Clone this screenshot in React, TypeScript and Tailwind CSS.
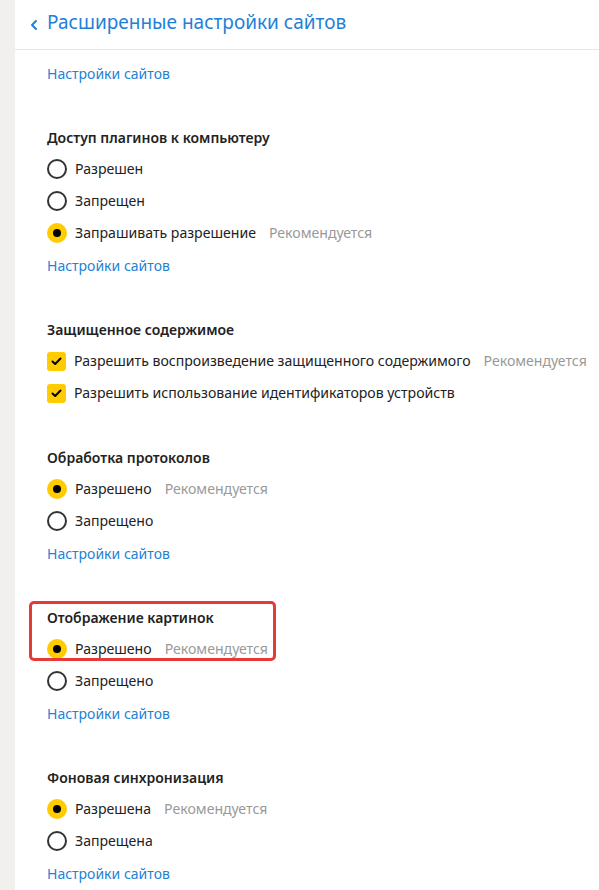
import { ReactNode } from 'react';

type Opt = { label: string; checked?: boolean; rec?: boolean };

function Radio({ checked }: { checked?: boolean }) {
  if (checked) {
    return (
      <span className="flex h-5 w-5 shrink-0 items-center justify-center rounded-full bg-[#ffcc00]">
        <span className="h-2 w-2 rounded-full bg-black" />
      </span>
    );
  }
  return <span className="h-5 w-5 shrink-0 rounded-full border-2 border-[#333]" />;
}

function Check() {
  return (
    <span className="flex h-[19px] w-[19px] shrink-0 items-center justify-center rounded-[3px] bg-[#ffcc00]">
      <svg width="11" height="9" viewBox="0 0 11 9" fill="none">
        <path d="M1.5 4.5 L4.2 7 L9.5 1.5" stroke="#000" strokeWidth="2" strokeLinecap="round" strokeLinejoin="round" />
      </svg>
    </span>
  );
}

function Row({ children, label, rec }: { children: ReactNode; label: string; rec?: boolean }) {
  return (
    <div className="flex h-8 items-center">
      {children}
      <span className="ml-2 whitespace-nowrap text-[14.1px] text-[#222]">{label}</span>
      {rec && <span className="ml-[13px] whitespace-nowrap text-[14.1px] text-[#999]">Рекомендуется</span>}
    </div>
  );
}

function Link() {
  return (
    <div className="flex h-8 items-center text-[14px] text-[#2382d8]">Настройки сайтов</div>
  );
}

function Title({ text }: { text: string }) {
  return <div className="flex h-8 items-center text-[14px] font-semibold text-[#222]">{text}</div>;
}

function RadioSection({ title, opts, boxed }: { title: string; opts: Opt[]; boxed?: boolean }) {
  return (
    <div className="relative mt-8">
      {boxed && (
        <div className="pointer-events-none absolute left-[-18px] top-0 h-[60px] w-[247px] rounded-[5px] border-[3px] border-[#e53a35]" />
      )}
      <Title text={title} />
      {opts.map((o) => (
        <Row key={o.label} label={o.label} rec={o.rec}>
          <Radio checked={o.checked} />
        </Row>
      ))}
      <Link />
    </div>
  );
}

export default function App() {
  return (
    <div
      className="flex h-[890px] w-[599px] overflow-hidden bg-white"
      style={{ fontFamily: '"Noto Sans", "Open Sans", sans-serif' }}
    >
      <div className="w-[15px] shrink-0 bg-[#f1f0ee]" />
      <div className="flex-1">
        <div className="flex h-[50px] items-center border-b border-[#e6e6e6] pl-[14px]">
          <svg width="10" height="12" viewBox="0 0 10 12" fill="none">
            <path d="M7 2 L3 6 L7 10" stroke="#1f7fd8" strokeWidth="2" strokeLinecap="round" strokeLinejoin="round" />
          </svg>
          <span className="ml-[8px] pb-[4px] text-[19px] text-[#1f7fd8]">Расширенные настройки сайтов</span>
        </div>
        <div className="pl-[32px] pt-[7px]">
          <Link />
          <RadioSection
            title="Доступ плагинов к компьютеру"
            opts={[
              { label: 'Разрешен' },
              { label: 'Запрещен' },
              { label: 'Запрашивать разрешение', checked: true, rec: true },
            ]}
          />
          <div className="mt-8">
            <Title text="Защищенное содержимое" />
            <Row label="Разрешить воспроизведение защищенного содержимого" rec>
              <Check />
            </Row>
            <Row label="Разрешить использование идентификаторов устройств">
              <Check />
            </Row>
          </div>
          <RadioSection
            title="Обработка протоколов"
            opts={[
              { label: 'Разрешено', checked: true, rec: true },
              { label: 'Запрещено' },
            ]}
          />
          <RadioSection
            title="Отображение картинок"
            boxed
            opts={[
              { label: 'Разрешено', checked: true, rec: true },
              { label: 'Запрещено' },
            ]}
          />
          <RadioSection
            title="Фоновая синхронизация"
            opts={[
              { label: 'Разрешена', checked: true, rec: true },
              { label: 'Запрещена' },
            ]}
          />
        </div>
      </div>
    </div>
  );
}
